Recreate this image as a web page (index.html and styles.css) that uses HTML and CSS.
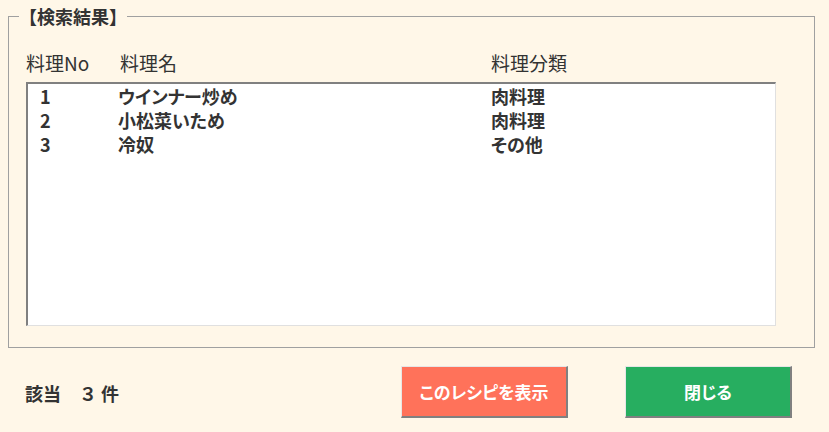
FILE: index.html
```html
<!DOCTYPE html>
<html lang="ja">
<head>
    <meta charset="UTF-8">
    <meta name="viewport" content="width=device-width, initial-scale=1.0">
    <title>検索結果</title>
    <link rel="stylesheet" href="styles.css">
</head>
<body>

<div class="window">
    <!-- 検索結果 -->
    <fieldset class="result-box">
        <legend>【検索結果】</legend>

        <div class="list-header">
            <span>料理No</span>
            <span>料理名</span>
            <span>料理分類</span>
        </div>

        <div class="list-box">
            <div class="list-row">
                <span>1</span>
                <span>ウインナー炒め</span>
                <span>肉料理</span>
            </div>
            <div class="list-row">
                <span>2</span>
                <span>小松菜いため</span>
                <span>肉料理</span>
            </div>
            <div class="list-row">
                <span>3</span>
                <span>冷奴</span>
                <span>その他</span>
            </div>
        </div>
    </fieldset>

    <!-- 件数とボタン -->
    <div class="footer">
        <div class="count">該当　３ 件</div>
        <button class="btn btn-show">このレシピを表示</button>
        <button class="btn btn-close">閉じる</button>
    </div>
</div>

</body>
</html>
```

FILE: styles.css
```css
body {
    font-family: "Noto Sans CJK JP", "Noto Sans", sans-serif;
    background-color: #fff7e8;
    color: #333;
    margin: 0;
    font-size: 18px;
    line-height: 24px;
}
.window {
    padding: 4px 14px 0 8px;
}
.result-box {
    margin: 0;
    border: 1px solid #a0a0a0;
    padding: 23px 38px 21px 17px;
}
.result-box legend {
    font-weight: bold;
    padding: 0;
    margin-left: -7px;
    line-height: 24px;
}
.list-header {
    display: grid;
    grid-template-columns: 94px 371px 1fr;
    font-size: 19px;
}
.list-box {
    margin-top: 7px;
    height: 241px;
    background-color: #fff;
    border-top: 2px solid #808080;
    border-left: 2px solid #808080;
    border-right: 1px solid #e0e0e0;
    border-bottom: 1px solid #e0e0e0;
    padding: 0 0 0 12px;
}
.list-row {
    display: grid;
    grid-template-columns: 78px 373px 1fr;
    font-weight: bold;
    font-feature-settings: "palt";
}
.footer {
    display: flex;
    align-items: center;
    margin-top: 18px;
    padding-left: 17px;
    padding-right: 23px;
}
.count {
    flex: 1;
    font-weight: bold;
    margin-top: 1px;
}
.btn {
    width: 167px;
    height: 52px;
    font-family: inherit;
    font-size: 17px;
    font-weight: bold;
    font-feature-settings: "palt";
    color: #fff;
    border-top: 1px solid #e6e6e6;
    border-left: 1px solid #e6e6e6;
    border-right: 2px solid #808080;
    border-bottom: 2px solid #808080;
    cursor: pointer;
}
.btn-show {
    background-color: #ff725a;
    margin-right: 57px;
}
.btn-close {
    background-color: #27ae60;
}
```
